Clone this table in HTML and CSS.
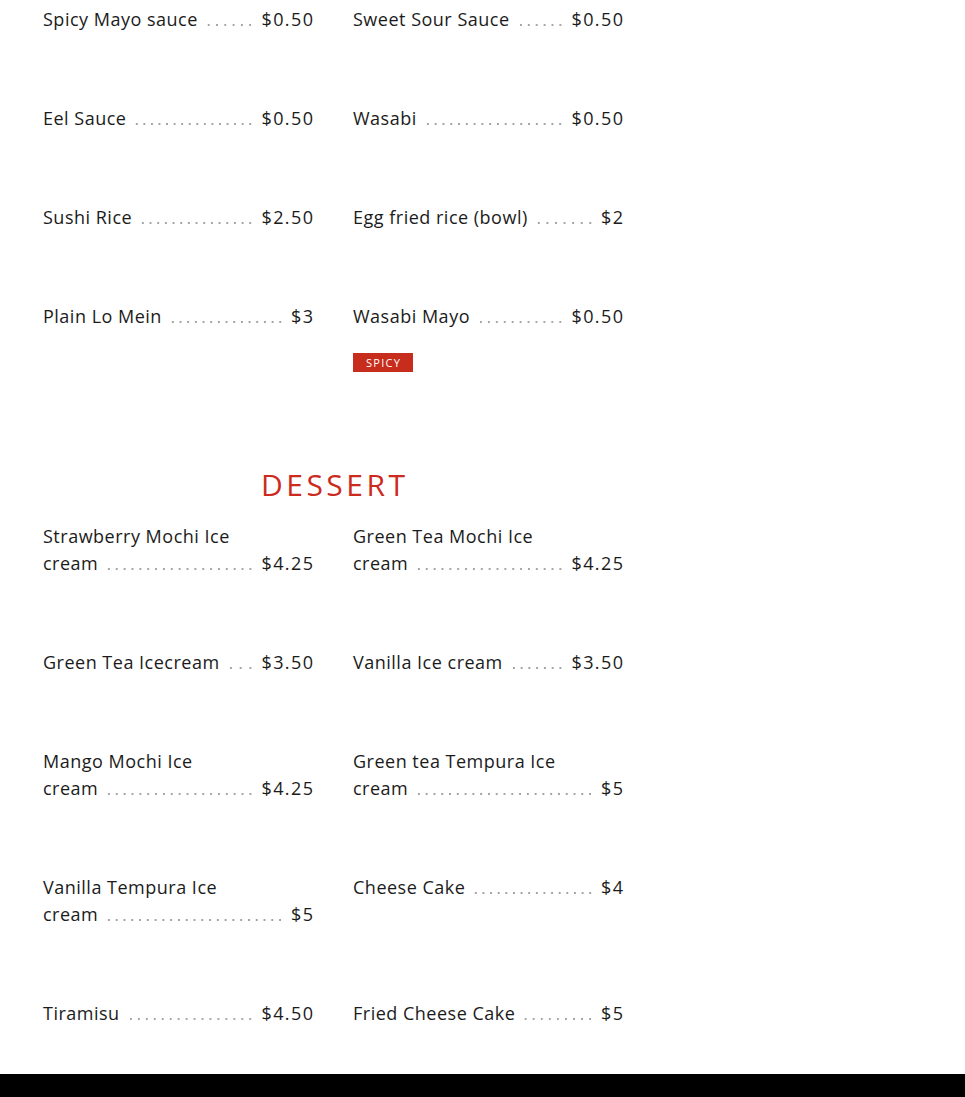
FILE: index.html
```html
<!DOCTYPE html>
<html lang="en">
<head>
<meta charset="utf-8">
<title>Menu</title>
<link rel="stylesheet" href="styles.css">
</head>
<body>
<main class="menu">
  <section class="section">
    <div class="grid">
      <div class="item"><div class="row"><span class="name">Spicy Mayo sauce</span><span class="dots"></span><span class="price">$0.50</span></div></div>
      <div class="item"><div class="row"><span class="name">Sweet Sour Sauce</span><span class="dots"></span><span class="price">$0.50</span></div></div>
      <div class="item"><div class="row"><span class="name">Eel Sauce</span><span class="dots"></span><span class="price">$0.50</span></div></div>
      <div class="item"><div class="row"><span class="name">Wasabi</span><span class="dots"></span><span class="price">$0.50</span></div></div>
      <div class="item"><div class="row"><span class="name">Sushi Rice</span><span class="dots"></span><span class="price">$2.50</span></div></div>
      <div class="item"><div class="row"><span class="name">Egg fried rice (bowl)</span><span class="dots"></span><span class="price">$2</span></div></div>
      <div class="item"><div class="row"><span class="name">Plain Lo Mein</span><span class="dots"></span><span class="price">$3</span></div></div>
      <div class="item"><div class="row"><span class="name">Wasabi Mayo</span><span class="dots"></span><span class="price">$0.50</span></div><span class="badge">SPICY</span></div>
    </div>
  </section>
  <section class="section">
    <h2 class="heading">DESSERT</h2>
    <div class="grid">
      <div class="item"><div class="line">Strawberry Mochi Ice</div><div class="row"><span class="name">cream</span><span class="dots"></span><span class="price">$4.25</span></div></div>
      <div class="item"><div class="line">Green Tea Mochi Ice</div><div class="row"><span class="name">cream</span><span class="dots"></span><span class="price">$4.25</span></div></div>
      <div class="item"><div class="row"><span class="name">Green Tea Icecream</span><span class="dots"></span><span class="price">$3.50</span></div></div>
      <div class="item"><div class="row"><span class="name">Vanilla Ice cream</span><span class="dots"></span><span class="price">$3.50</span></div></div>
      <div class="item"><div class="line">Mango Mochi Ice</div><div class="row"><span class="name">cream</span><span class="dots"></span><span class="price">$4.25</span></div></div>
      <div class="item"><div class="line">Green tea Tempura Ice</div><div class="row"><span class="name">cream</span><span class="dots"></span><span class="price">$5</span></div></div>
      <div class="item"><div class="line">Vanilla Tempura Ice</div><div class="row"><span class="name">cream</span><span class="dots"></span><span class="price">$5</span></div></div>
      <div class="item"><div class="row"><span class="name">Cheese Cake</span><span class="dots"></span><span class="price">$4</span></div></div>
      <div class="item"><div class="row"><span class="name">Tiramisu</span><span class="dots"></span><span class="price">$4.50</span></div></div>
      <div class="item"><div class="row"><span class="name">Fried Cheese Cake</span><span class="dots"></span><span class="price">$5</span></div></div>
    </div>
  </section>
</main>
<footer class="footer"></footer>
</body>
</html>
```
FILE: styles.css
```css
html, body {
  margin: 0;
  padding: 0;
  background: #ffffff;
}
body {
  font-family: "Open Sans", "DejaVu Sans", sans-serif;
  color: #1b1b1b;
}
.menu {
  width: 580px;
  padding: 6px 0 0 43px;
}
.grid {
  display: grid;
  grid-template-columns: 270px 270px;
  column-gap: 40px;
  row-gap: 72px;
}
.item {
  font-size: 18px;
  line-height: 27px;
  letter-spacing: 0.5px;
}
.line {
  white-space: nowrap;
}
.row {
  display: flex;
  align-items: stretch;
}
.name {
  white-space: nowrap;
}
.dots {
  flex: 1 1 auto;
  margin: 0 7px 0 7px;
  background-image: radial-gradient(circle, #a3a3a3 0.8px, transparent 1.3px);
  background-size: 7.5px 4px;
  background-position: left 17px;
  background-repeat: space no-repeat;
}
.price {
  white-space: nowrap;
  letter-spacing: 1.4px;
  margin-right: -1.4px;
}
.badge {
  display: inline-block;
  margin-top: 23px;
  background: #c62d1c;
  color: #ffffff;
  font-size: 11px;
  line-height: 19px;
  letter-spacing: 1.3px;
  padding: 0 12px 0 13px;
  vertical-align: top;
}
.heading {
  margin: 93px 0 18px 0;
  padding-left: 3.5px;
  text-align: center;
  color: #cc2a1c;
  font-weight: 400;
  font-size: 30px;
  line-height: 40px;
  letter-spacing: 3.5px;
}
.footer {
  margin-top: 47px;
  height: 80px;
  background: #000000;
}
```
